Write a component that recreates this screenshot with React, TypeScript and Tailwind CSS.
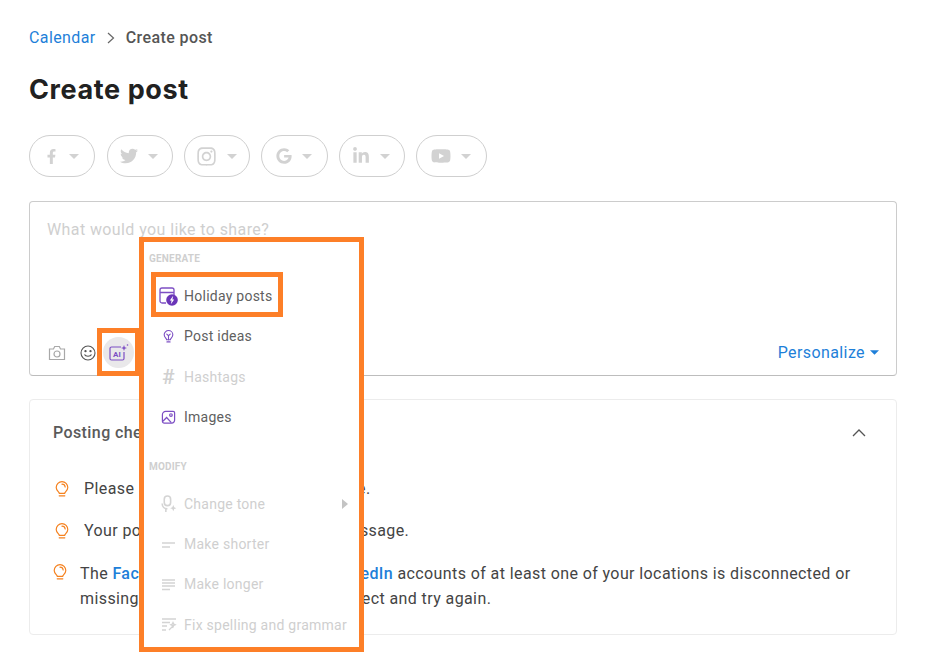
import React from "react";
import { FaFacebookF, FaTwitter, FaInstagram, FaGoogle, FaLinkedinIn, FaYoutube } from "react-icons/fa";

const Caret = ({ className = "" }: { className?: string }) => (
  <svg width="10" height="5" viewBox="0 0 10 5" className={className}><path d="M0 0h10L5 5z" fill="currentColor" /></svg>
);

const Pill = ({ w, icon }: { w: string; icon: React.ReactNode }) => (
  <div className={`${w} h-[42px] rounded-full border border-[#cfcfcf] flex items-center justify-center gap-[10px] pr-[2px] text-[#d2d2d2]`}>
    {icon}
    <Caret />
  </div>
);

const Bulb = () => (
  <svg width="14" height="17" viewBox="0 0 15 18" fill="none" stroke="#f58220" strokeWidth="1.300" className="shrink-0">
    <path d="M4.700 13.200c0-1.600-3.400-3-3.400-6.400a6.200 6.200 0 0 1 12.400 0c0 3.400-3.400 4.800-3.400 6.400z" />
    <path d="M4.500 15.800h6M7.500 3.300c1.800 0 3.200 1.300 3.400 3" strokeLinecap="round" />
  </svg>
);

const P = "#7d4fc4";
const G = "#d4d4d4";

const CalIcon = () => (
  <svg width="19" height="19" viewBox="0 0 19 19" fill="none">
    <path d="M7 16H3a2 2 0 0 1-2-2V3a2 2 0 0 1 2-2h10a2 2 0 0 1 2 2v5M1 5.500h14" stroke={P} strokeWidth="1.300" />
    <circle cx="13" cy="13" r="5.800" fill="#6a35b8" />
    <path d="M14.200 8.800 10.800 13.600h1.800l-.8 3.600 3.400-4.800h-1.800z" fill="#fff" />
  </svg>
);
const BulbIcon = () => (
  <svg width="11" height="15" viewBox="0 0 14 17" fill="none" stroke={P} strokeWidth="1.400">
    <path d="M4.600 12.600c0-1.600-3.100-2.800-3.100-6.200a5.500 5.500 0 0 1 11 0c0 3.400-3.100 4.600-3.100 6.200z" />
    <path d="M5 15.400h4M7 12.500V7.500M4.800 5.500 7 7.500l2.200-2" strokeLinecap="round" />
  </svg>
);
const ImgIcon = () => (
  <svg width="15" height="15" viewBox="0 0 16 16" fill="none" stroke={P} strokeWidth="1.300">
    <path d="M5 1.500h8a1.500 1.500 0 0 1 1.500 1.500v8a3 3 0 0 1-3 3h-8A2 2 0 0 1 1.500 12V5A3.500 3.500 0 0 1 5 1.500z" />
    <path d="m2 12 4-4 5 5.500" /><circle cx="10.600" cy="5.400" r="1.400" />
  </svg>
);
const ToneIcon = () => (
  <svg width="17" height="18" viewBox="0 0 16 17" fill="none" stroke={G} strokeWidth="1.500">
    <rect x="4" y="1" width="6" height="9" rx="3" />
    <path d="M2 8c0 3 2.200 5 5 5M5.500 13v3" />
    <path d="M12.500 9.500l.9 2 2 .9-2 .9-.9 2-.9-2-2-.9 2-.9z" fill={G} stroke="none" />
  </svg>
);
const ShortIcon = () => (
  <svg width="13" height="6" viewBox="0 0 13 6" stroke={G} strokeWidth="1.600"><path d="M0 1h13M0 5h8" /></svg>
);
const LongIcon = () => (
  <svg width="13" height="12" viewBox="0 0 13 12" stroke={G} strokeWidth="1.400"><path d="M0 1h13M0 4h13M0 7h13M0 10.500h8" /></svg>
);
const FixIcon = () => (
  <svg width="16" height="14" viewBox="0 0 16 14" fill="none" stroke={G} strokeWidth="1.300">
    <path d="M1 1h14M1 4.500h8M1 8h5M1 12h4" />
    <path d="m8 12 5-5M12 4.500l.7 1.500 1.500.7-1.500.7-.7 1.500-.7-1.500-1.500-.7 1.500-.7z" />
  </svg>
);

const Item = ({ icon, label, dim, tall }: { icon: React.ReactNode; label: string; dim?: boolean; tall?: boolean }) => (
  <div className={`${tall ? "h-[41px]" : "h-[40.330px]"} flex items-center text-[14px] tracking-[0.25px] ${dim ? "text-[#cfcfcf]" : "text-[#5f5f5f]"}`}>
    <span className="w-[19px] flex justify-center mr-[6px]">{icon}</span>
    {label}
  </div>
);

export default function App() {
  return (
    <div className="relative h-[663px] w-[927px] overflow-hidden bg-white pl-[29px] pr-[30px] pt-[27px] font-['Roboto',sans-serif] text-[16px] tracking-[0.4px] text-[#4a4a4a]">
      <div className="flex h-[21px] items-center leading-[21px]">
        <span className="text-[#1e7fd9]">Calendar</span>
        <svg width="8" height="12" viewBox="0 0 8 12" fill="none" stroke="#666" strokeWidth="1.200" className="ml-[11px] mr-[11px]"><path d="m1 1 5.500 5L1 11" /></svg>
        <span className="font-medium text-[#555]">Create post</span>
      </div>
      <h1 className="mt-[22px] h-[40px] text-[27px] font-bold leading-[40px] tracking-[0.6px] text-[#212121] font-['Inter',sans-serif]">Create post</h1>
      <div className="mt-[25px] flex h-[42px] items-center gap-[11px]">
        <Pill w="w-[66px]" icon={<FaFacebookF size={15} />} />
        <Pill w="w-[66px] ml-px" icon={<FaTwitter size={18} />} />
        <Pill w="w-[66px]" icon={<FaInstagram size={21} />} />
        <Pill w="w-[67px]" icon={<FaGoogle size={16} />} />
        <Pill w="w-[66px]" icon={<FaLinkedinIn size={18} />} />
        <Pill w="w-[71px]" icon={<FaYoutube size={20} />} />
      </div>
      <div className="mt-[24px] flex h-[175px] flex-col justify-between rounded-[4px] border border-[#cccccc] border-b-[#bdbdbd] pb-[7px] pl-[17px] pr-[17px] pt-[16px]">
        <div className="leading-[24px] text-[#cfcfcf]">What would you like to share?</div>
        <div className="flex items-center justify-between">
          <div className="flex items-center">
            <svg width="18" height="16" viewBox="0 0 18 16" fill="none" stroke="#a8a8a8" strokeWidth="1.200" className="mr-[14px] ml-px">
              <path d="M1.500 4h4l1.200-2.500h4.600L12.500 4h4v10.500h-15z" /><circle cx="9" cy="9" r="3" />
            </svg>
            <svg width="16" height="16" viewBox="0 0 16 16" fill="none" stroke="#555" strokeWidth="1.100" className="mr-[2px]">
              <circle cx="8" cy="8" r="7" /><path d="M4.500 9.500c1 2.300 6 2.300 7 0" /><circle cx="5.500" cy="6.200" r=".6" fill="#555" /><circle cx="10.500" cy="6.200" r=".6" fill="#555" />
            </svg>
            <div className="ml-[5px] flex h-[31px] w-[31px] items-center justify-center rounded-full bg-[#e9e8ea]">
              <svg width="20" height="18" viewBox="0 0 20 18" fill="none">
                <path d="M12 3H2.500A1.500 1.500 0 0 0 1 4.500v10A1.500 1.500 0 0 0 2.500 16h11a1.500 1.500 0 0 0 1.500-1.500V8" stroke={P} strokeWidth="1.200" />
                <path d="M15 1l.8 2.200L18 4l-2.200.8L15 7l-.8-2.200L12 4l2.200-.8z" fill={P} />
                <circle cx="18.500" cy="1" r=".8" fill={P} />
                <text x="4" y="13" fontSize="8" fontWeight="700" letterSpacing="0" fill={P} fontFamily="Roboto, sans-serif">AI</text>
              </svg>
            </div>
          </div>
          <div className="flex items-center gap-[5px] text-[#1e7fd9]">Personalize<Caret className="w-[9px]" /></div>
        </div>
      </div>
      <div className="mt-[23px] h-[236px] rounded-[4px] border border-[#ececec] pl-[23px] pr-[30px] pt-[21px]">
        <div className="flex h-[24px] items-center justify-between">
          <span className="font-medium text-[#5a5a5a]">Posting checklist</span>
          <svg width="14" height="8" viewBox="0 0 14 8" fill="none" stroke="#555" strokeWidth="1.300"><path d="m1 7 6-6 6 6" /></svg>
        </div>
        <div className="mt-[32px] flex h-[24px] items-center pl-[2px] text-[#444]"><Bulb /><span className="ml-[15px]">Please select at least one social page.</span></div>
        <div className="mt-[18px] flex h-[24px] items-center pl-[2px] text-[#444]"><Bulb /><span className="ml-[15px]">Your post must have a visual or a message.</span></div>
        <div className="mt-[18px] flex items-start text-[#444]">
          <span className="mt-[3px]"><Bulb /></span>
          <p className="ml-[13px] leading-[25px]">The <b className="font-medium text-[#1e7fd9]">Facebook, Google, YouTube, LinkedIn</b> accounts of at least one of your locations is disconnected or missing posting rights. Please reconnect and try again.</p>
        </div>
      </div>

      <div className="absolute left-[139px] top-[237px] h-[415px] w-[225px] border-[5px] border-[#fd7f28] bg-white pl-[5px] pr-[5px] pt-[11px]">
        <div className="h-[12px] text-[10px] font-bold leading-[12px] tracking-[0.2px] text-[#cfcfcf]">GENERATE</div>
        <div className="ml-[2px] mt-[7px] -mb-[1px] flex h-[45px] w-[132px] items-center border-[5px] border-[#fd7f28] pl-[3px] pt-[4px] text-[14px] tracking-[0.25px] text-[#5f5f5f]">
          <span className="mr-[6px] flex w-[19px] justify-center"><CalIcon /></span>
          Holiday posts
        </div>
        <div className="ml-[10px]">
          <Item icon={<BulbIcon />} label="Post ideas" tall />
          <Item icon={<span className="text-[21px] font-medium leading-none text-[#d0d0d0]">#</span>} label="Hashtags" dim />
          <Item icon={<ImgIcon />} label="Images" />
        </div>
        <div className="mt-[23px] h-[12px] text-[10px] font-bold leading-[12px] tracking-[0.2px] text-[#cfcfcf]">MODIFY</div>
        <div className="ml-[10px] mt-[11.500px]">
          <div className="relative">
            <Item icon={<ToneIcon />} label="Change tone" dim />
            <svg width="6" height="10" viewBox="0 0 6 10" className="absolute right-[6px] top-[15px]"><path d="M0 0l6 5-6 5z" fill="#c4c4c4" /></svg>
          </div>
          <Item icon={<ShortIcon />} label="Make shorter" dim />
          <Item icon={<LongIcon />} label="Make longer" dim />
          <Item icon={<FixIcon />} label="Fix spelling and grammar" dim />
        </div>
      </div>
      <div className="absolute left-[97px] top-[328px] h-[48px] w-[43px] border-[5px] border-[#fd7f28]" />
    </div>
  );
}
